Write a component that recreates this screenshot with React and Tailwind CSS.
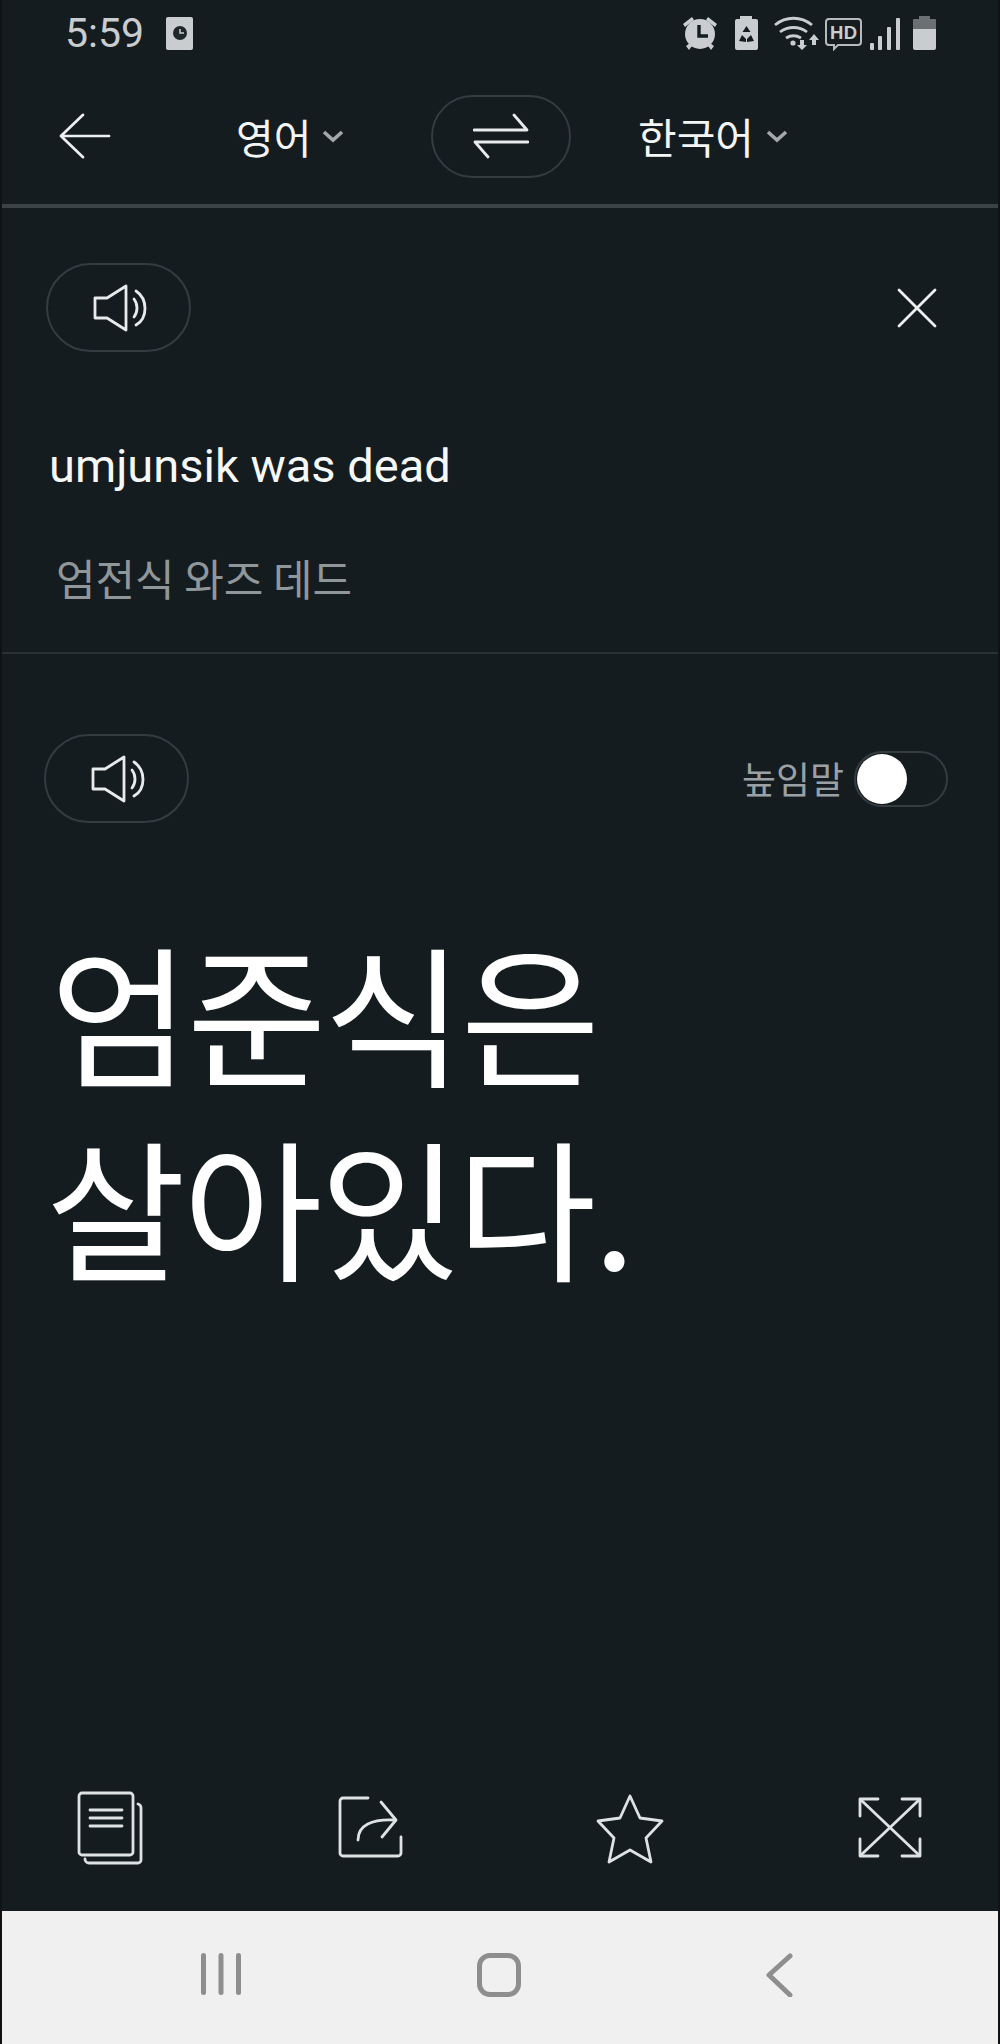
const KR = 'font-["Noto_Sans_CJK_KR",sans-serif]';

function Chevron({ className }) {
  return (
    <svg viewBox="0 0 22 14" className={className} fill="none" stroke="#a3a9ab" strokeWidth="3.6">
      <path d="M2 3l9 8 9-8" />
    </svg>
  );
}

function SpeakerPill() {
  return (
    <button className="flex h-[89px] w-[145px] items-center justify-center rounded-full border-2 border-[#353c40] pl-[4px]">
      <svg viewBox="0 0 56 48" className="h-[48px] w-[56px]" fill="none" stroke="#e8eaeb" strokeWidth="2.8" strokeLinejoin="round" strokeLinecap="round">
        <path d="M2 14h12L33 2v44L14 34H2z" />
        <path d="M41 15c4 5 4 13 0 18" />
        <path d="M43 7c12 8 12 27 0 34" />
      </svg>
    </button>
  );
}

function StatusIcons() {
  return (
    <svg viewBox="0 0 260 36" className="h-[36px] w-[260px]" fill="#c9cdcf">
      {/* alarm */}
      <circle cx="22" cy="19" r="15" />
      <path d="M5 9l9-7 2 3-9 7zM39 9l-9-7-2 3 9 7zM8 31l4-3 2 3-3 4zM36 31l-4-3-2 3 3 4z" />
      <path d="M21 10v11h9" fill="none" stroke="#151c20" strokeWidth="3.4" />
      {/* battery with recycle mark */}
      <path d="M59 4h3V1h12v3h4a2 2 0 0 1 2 2v27a2 2 0 0 1-2 2H59a2 2 0 0 1-2-2V6a2 2 0 0 1 2-2z" />
      <path d="M68.500 11l4 6h-8zM61 26l3-6 4 4v3zM76 26l-3-6-4 4v3z" fill="#151c20" />
      {/* wifi */}
      <g fill="none" stroke="#c9cdcf" strokeWidth="2.8">
        <path d="M97 10c11-9 26-9 37 0" />
        <path d="M102 17c8-6 19-6 27 0" />
        <path d="M108 23c5-3 10-3 15 0" />
      </g>
      <circle cx="115" cy="28" r="2.600" />
      <path d="M122 25h4v5h3l-5 5-5-5h3zM134 30h4v-5h3l-5-6-5 6h3z" />
      {/* HD */}
      <path d="M151 4h29a3 3 0 0 1 3 3v20a3 3 0 0 1-3 3h-20l-4 4v-4h-5a3 3 0 0 1-3-3V7a3 3 0 0 1 3-3z" fill="none" stroke="#b4b9bb" strokeWidth="2" />
      <text x="165.500" y="24" textAnchor="middle" fontFamily="Liberation Sans" fontWeight="700" fontSize="18.500" textLength="27">HD</text>
      {/* signal */}
      <rect x="192" y="28" width="4" height="7" rx="1" />
      <rect x="200" y="21" width="4" height="14" rx="1" />
      <rect x="209" y="12" width="4" height="23" rx="1" />
      <rect x="218" y="3" width="4" height="32" rx="1" />
      {/* battery */}
      <path d="M236 4h5V1h11v3h5a1 1 0 0 1 1 1v9h-23V5a1 1 0 0 1 1-1z" fill="#6b7073" />
      <path d="M235 14h23v19a2 2 0 0 1-2 2h-19a2 2 0 0 1-2-2z" />
    </svg>
  );
}

function BottomIcon({ children }) {
  return (
    <svg viewBox="0 0 72 76" className="h-[76px] w-[72px]" fill="none" stroke="#dfe2e3" strokeWidth="2.8" strokeLinecap="round" strokeLinejoin="round">
      {children}
    </svg>
  );
}

export default function App() {
  return (
    <div className={`flex h-[2044px] w-[1000px] flex-col overflow-hidden border-x-2 border-[#0f1316] bg-[#151c20] ${KR}`}>
      <div className="flex h-[66px] shrink-0 items-center justify-between pl-[63px] pr-[60px]">
        <div className="flex items-center gap-[22px]">
          <span className='font-["Roboto",sans-serif] text-[41px] leading-none text-[#c9cdcf]'>5:59</span>
          <span className="flex h-[33px] w-[27px] items-center justify-center rounded-[2px] bg-[#c9cdcf]">
            <svg viewBox="0 0 14 14" className="h-[14px] w-[14px]">
              <circle cx="7" cy="7" r="7" fill="#20272b" />
              <path d="M7 3v4h4" fill="none" stroke="#c9cdcf" strokeWidth="1.5" />
            </svg>
          </span>
        </div>
        <StatusIcons />
      </div>

      <div className="flex h-[142px] shrink-0 items-center border-b-4 border-[#3c4346] pt-[2px]">
        <svg viewBox="0 0 54 48" className="ml-[57px] h-[48px] w-[52px]" fill="none" stroke="#eceeef" strokeWidth="2.8" strokeLinecap="round" strokeLinejoin="round">
          <path d="M25 2L2 24l23 22M2 24h50" />
        </svg>
        <div className="ml-[125px] flex w-[195px] items-center gap-[11px]">
          <span className="text-[41px] leading-none text-[#f4f5f5]">영어</span>
          <Chevron className="h-[14px] w-[22px]" />
        </div>
        <button className="flex h-[83px] w-[140px] items-center justify-center rounded-full border-2 border-[#353c40]">
          <svg viewBox="0 0 56 48" className="h-[48px] w-[56px]" fill="none" stroke="#e8eaeb" strokeWidth="2.8" strokeLinecap="round" strokeLinejoin="round">
            <path d="M1 18h53L41 3" />
            <path d="M55 30H2l13 15" />
          </svg>
        </button>
        <div className="ml-[67px] flex items-center gap-[12px]">
          <span className="text-[42px] leading-none text-[#f4f5f5]">한국어</span>
          <Chevron className="h-[14px] w-[22px]" />
        </div>
      </div>

      <section className="flex h-[446px] shrink-0 flex-col border-b-2 border-[#2a3135] pl-[44px] pr-[61px] pt-[55px]">
        <div className="flex items-center justify-between">
          <SpeakerPill />
          <svg viewBox="0 0 40 40" className="h-[40px] w-[40px]" fill="none" stroke="#eceeef" strokeWidth="2.8" strokeLinecap="round">
            <path d="M2 2l36 36M38 2L2 38" />
          </svg>
        </div>
        <p className='mt-[88px] pl-[3px] font-["Roboto",sans-serif] text-[47px] leading-[52px] text-[#f6f7f7]'>umjunsik was dead</p>
        <p className="mt-[61px] pl-[10px] text-[43px] leading-[48px] text-[#90979a]">엄전식 와즈 데드</p>
      </section>

      <section className="flex flex-1 flex-col">
        <div className="flex items-center justify-between pl-[42px] pr-[50px] pt-[80px]">
          <SpeakerPill />
          <div className="flex items-center gap-[10px]">
            <span className="text-[37px] leading-none text-[#9aa0a3]">높임말</span>
            <div className="relative h-[56px] w-[94px] rounded-full border-2 border-[#353c40]">
              <span className="absolute left-[1px] top-[1px] h-[50px] w-[50px] rounded-full bg-white" />
            </div>
          </div>
        </div>
        <h1 className="mt-[90px] pl-[48px] text-[152px] font-normal leading-[194px] tracking-[-3px] text-white">
          <span className="block">엄준식은</span>
          <span className="-ml-[4px] block">살아있다.</span>
        </h1>
      </section>

      <div className="flex h-[120px] shrink-0 items-start justify-between pl-[72px] pr-[72px]">
        <BottomIcon>
          <rect x="5" y="2" width="54" height="62" rx="3" />
          <path d="M64 13a4 4 0 0 1 3 4v52a3 3 0 0 1-3 3H15a4 4 0 0 1-4-4" />
          <path d="M16 19h32M16 27h32M16 35h32" />
        </BottomIcon>
        <BottomIcon>
          <path d="M34 7H9a3 3 0 0 0-3 3v52a3 3 0 0 0 3 3h55a3 3 0 0 0 3-3V46" />
          <path d="M24 49c0-15 14-21 36-20" />
          <path d="M47 11l15 18-14 17" />
        </BottomIcon>
        <BottomIcon>
          <path d="M36 5l10 22 22 3-16 17 5 24-21-12-21 12 5-24L4 30l22-3z" />
        </BottomIcon>
        <BottomIcon>
          <path d="M6 25V8h18M66 25V8H48M6 48v17h18M66 48v17H48" />
          <path d="M7 9l58 55M65 9L7 64" />
        </BottomIcon>
      </div>

      <nav className="flex h-[133px] shrink-0 items-center bg-[#f0f0f0] pb-[5px] pl-[199px]">
        <svg viewBox="0 0 40 44" className="h-[44px] w-[40px]" fill="#8e8e8e">
          <rect x="0" y="0" width="5" height="42" rx="2.500" />
          <rect x="17.500" y="0" width="5" height="42" rx="2.500" />
          <rect x="35" y="0" width="5" height="42" rx="2.500" />
        </svg>
        <span className="ml-[236px] h-[44px] w-[44px] rounded-[13px] border-[5px] border-[#8e8e8e]" />
        <svg viewBox="0 0 28 44" className="ml-[244px] h-[44px] w-[28px]" fill="none" stroke="#8e8e8e" strokeWidth="5" strokeLinecap="round" strokeLinejoin="round">
          <path d="M25 3L4 22l21 20" />
        </svg>
      </nav>
    </div>
  );
}
